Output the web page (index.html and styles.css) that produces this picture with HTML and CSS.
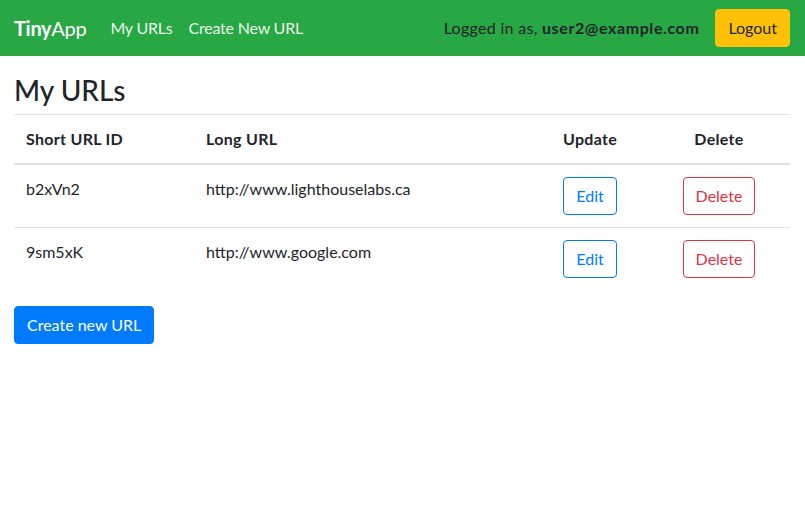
FILE: index.html
```html
<!DOCTYPE html>
<html lang="en">
<head>
<meta charset="utf-8">
<title>TinyApp</title>
<link rel="stylesheet" href="styles.css">
</head>
<body>
<nav class="navbar">
  <a class="brand" href="#"><b>Tiny</b>App</a>
  <div class="nav-links">
    <a class="nav-link" href="#">My URLs</a>
    <a class="nav-link" href="#">Create New URL</a>
  </div>
  <div class="nav-right">
    <span class="login-text">Logged in as, <b>user2@example.com</b></span>
    <button class="btn btn-warning">Logout</button>
  </div>
</nav>
<main class="main">
  <h1 class="title">My URLs</h1>
  <table class="table">
    <colgroup>
      <col class="c1"><col class="c2"><col class="c3"><col class="c4">
    </colgroup>
    <thead>
      <tr>
        <th>Short URL ID</th>
        <th>Long URL</th>
        <th class="center">Update</th>
        <th class="center">Delete</th>
      </tr>
    </thead>
    <tbody>
      <tr>
        <td>b2xVn2</td>
        <td>http://www.lighthouselabs.ca</td>
        <td class="center"><button class="btn btn-outline-primary">Edit</button></td>
        <td class="center"><button class="btn btn-outline-danger">Delete</button></td>
      </tr>
      <tr>
        <td>9sm5xK</td>
        <td>http://www.google.com</td>
        <td class="center"><button class="btn btn-outline-primary">Edit</button></td>
        <td class="center"><button class="btn btn-outline-danger">Delete</button></td>
      </tr>
    </tbody>
  </table>
  <button class="btn btn-primary">Create new URL</button>
</main>
</body>
</html>
```

FILE: styles.css
```css
* { box-sizing: border-box; }
body {
  margin: 0;
  font-family: "Lato", "Open Sans", sans-serif;
  font-size: 16px;
  line-height: 1.5;
  color: #212529;
  background: #fff;
}
a { text-decoration: none; }
.navbar {
  display: flex;
  align-items: center;
  height: 56px;
  padding: 0 15px 0 14px;
  background: #28a745;
}
.brand {
  font-size: 20px;
  line-height: 30px;
  color: #fff;
  margin-right: 16px;
  letter-spacing: -0.3px;
}
.nav-links { display: flex; }
.nav-link {
  color: rgba(255, 255, 255, 0.92);
  padding: 8px;
  letter-spacing: -0.2px;
}
.nav-right {
  margin-left: auto;
  display: flex;
  align-items: center;
  gap: 16px;
}
.login-text { color: #212529; letter-spacing: 0.3px; }
.login-text b { letter-spacing: 0.6px; }
.btn {
  display: inline-block;
  font-family: inherit;
  font-size: 16px;
  line-height: 24px;
  padding: 6px 12px;
  border: 1px solid transparent;
  border-radius: 4px;
  background: transparent;
  cursor: pointer;
}
.btn-warning { background: #ffc107; border-color: #ffc107; color: #212529; }
.btn-primary { background: #007bff; border-color: #007bff; color: #fff; }
.btn-outline-primary { border-color: #007bff; color: #007bff; }
.btn-outline-danger { border-color: #dc3545; color: #dc3545; }
.main {
  padding: 16px 15px 0 14px;
}
.title {
  margin: 0 0 6px;
  font-size: 28px;
  font-weight: 500;
  line-height: 36px;
}
.table {
  width: 100%;
  border-collapse: collapse;
  margin-bottom: 16px;
}
.c1 { width: 180px; }
.c2 { width: 338px; }
.c3 { width: 116px; }
.c4 { width: 142px; }
.table th,
.table td {
  padding: 12px;
  text-align: left;
  vertical-align: top;
  border-top: 1px solid #dee2e6;
}
.table thead th {
  vertical-align: bottom;
  border-bottom: 2px solid #dee2e6;
  font-weight: 700;
  letter-spacing: 0.3px;
}
.table .center { text-align: center; }
```
